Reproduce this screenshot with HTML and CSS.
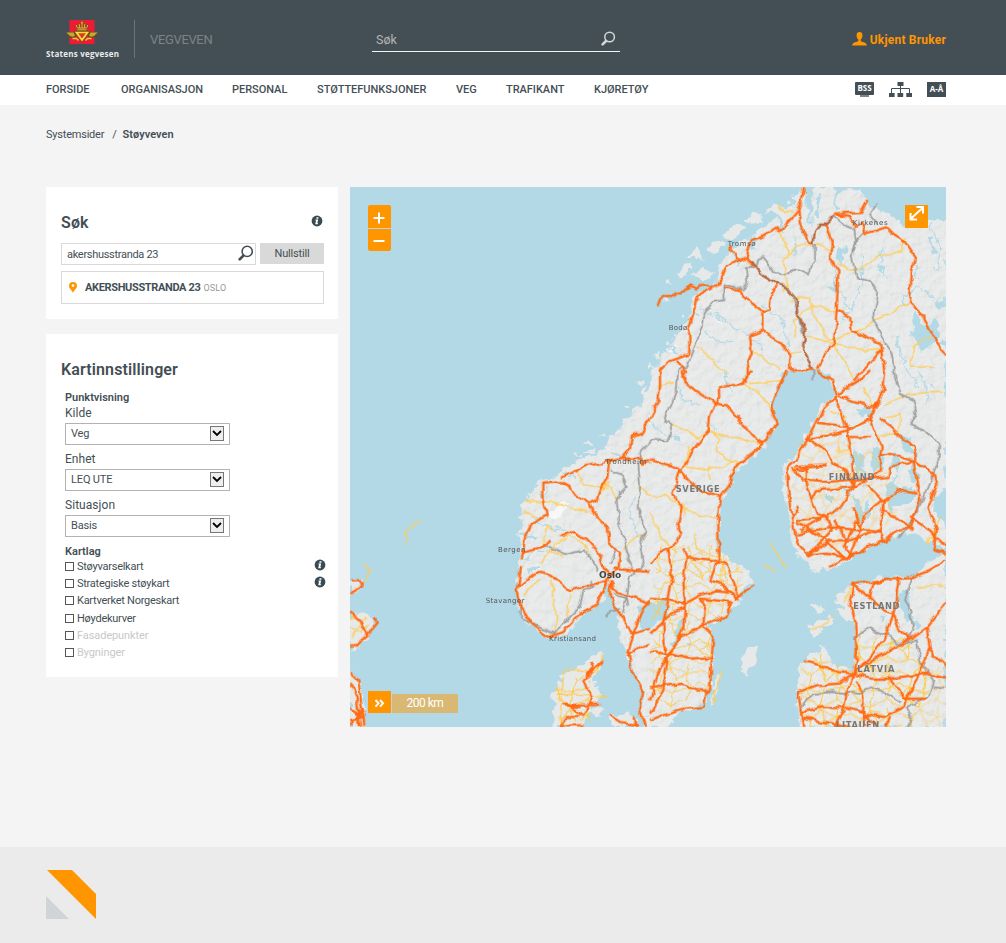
FILE: index.html
```html
<!DOCTYPE html>
<html lang="no">
<head>
<meta charset="utf-8">
<title>Støyveven</title>
<link rel="stylesheet" href="styles.css">
</head>
<body>
<svg class="defs" width="0" height="0">
  <symbol id="lens" viewBox="0 0 16 16"><circle cx="9.6" cy="6" r="4.8" fill="none" stroke="currentColor" stroke-width="1.5"/><path d="M6 10 2.600 13.400" stroke="currentColor" stroke-width="2.6" stroke-linecap="round"/></symbol>
  <symbol id="info" viewBox="0 0 12 12"><circle cx="6" cy="6" r="5.4" fill="#3a4a52"/><path d="M5.6 2.2h2l-.3 1.5h-2zM4.5 4.6h2.7L6.3 8.3h.8l-.2 1H4.2l.9-3.7h-.8z" fill="#fff"/></symbol>
</svg>
<header class="top">
  <div class="wrap top-row">
    <div class="brand">
      <svg class="crest" width="34" height="26" viewBox="0 0 34 26">
        <rect x="4.5" y="0" width="25" height="24" fill="#ed1c35"/>
        <path d="M.5 12h8.500l2.500 4-3 2.500-4-1-1-2.500zM33.500 12H25l-2.500 4 3 2.500 4-1 1-2.500z" fill="#66501f"/>
        <path d="M1.500 12.600h7l1.500 2.900-2 1.300-3-.8zM32.500 12.600h-7l-1.500 2.900 2 1.300 3-.8z" fill="#c8a52c"/>
        <path d="M11.500 12.500h11l-5.500 7.500z" fill="#e3342f" stroke="#66501f" stroke-width="3.400"/>
        <path d="M11.500 12.500h11l-5.500 7.500z" fill="#e3342f" stroke="#f5e03a" stroke-width="1.700"/>
        <path d="M7.500 18.500h4l2 2M26.500 18.500h-4l-2 2" fill="none" stroke="#e6cf35" stroke-width="1.400"/>
        <path d="M12.500 9.800h9M12.300 8 11.300 4.800M14.600 8l-.4-4M17 8V1.500M19.400 8l.4-4M21.700 8l1-3.200M15.700 2.800h2.600" fill="none" stroke="#66501f" stroke-width="2"/>
        <path d="M12.500 9.800h9M12.500 8h9M12.300 8 11.300 5M14.600 8l-.4-4M17 8V1.500M19.400 8l.4-4M21.700 8l1-3M15.900 2.800h2.200" fill="none" stroke="#d8bd2e" stroke-width="1"/>
      </svg>
      <span class="brand-name">Statens vegvesen</span>
    </div>
    <div class="site">VEGVEVEN</div>
    <div class="topsearch"><span>Søk</span><svg width="16" height="16"><use href="#lens"/></svg></div>
    <div class="user"><svg width="15" height="14" viewBox="0 0 15 14"><path d="M7.500 0C5.300 0 4.500 1.500 4.600 3.500c0 1.800.7 3.300 1.700 4v1.400C5.500 10 .4 9.800 0 13.600h15C14.600 9.800 9.500 10 8.700 8.900V7.500c1-.7 1.700-2.200 1.700-4C10.500 1.500 9.700 0 7.500 0z" fill="#ff9600"/></svg><span>Ukjent Bruker</span></div>
  </div>
</header>
<nav class="nav">
  <div class="wrap nav-row">
    <a class="n1">FORSIDE</a><a class="n2">ORGANISASJON</a><a class="n3">PERSONAL</a><a class="n4">STØTTEFUNKSJONER</a><a class="n5">VEG</a><a class="n6">TRAFIKANT</a><a class="n7">KJØRETØY</a>
    <div class="tools">
      <div class="bss"><span>BSS</span><i></i></div>
      <svg width="23" height="15" viewBox="0 0 23 15"><path d="M8.500 0h6v4h-6zM0 11h5.600v4H0zM8.500 11h5.700v4H8.500zM17.300 11H23v4h-5.700z" fill="#444f55"/><path d="M11.500 4v7M2.500 11V6.500h18V11" fill="none" stroke="#444f55"/></svg>
      <div class="az">A-Å</div>
    </div>
  </div>
</nav>
<main class="wrap">
  <div class="crumbs"><span>Systemsider</span><span class="slash">/</span><b>Støyveven</b></div>
  <div class="cols">
    <aside>
      <section class="panel search">
        <div class="head"><h2>Søk</h2><svg width="12" height="12"><use href="#info"/></svg></div>
        <div class="row"><div class="field"><span>akershusstranda 23</span><svg width="17" height="17"><use href="#lens"/></svg></div><div class="reset">Nullstill</div></div>
        <div class="hit"><svg width="8" height="11" viewBox="0 0 8 11"><path fill-rule="evenodd" d="M4 0a4 4 0 0 1 4 4C8 6.500 5 8 4 11 3 8 0 6.500 0 4a4 4 0 0 1 4-4zm0 2.200a1.400 1.400 0 1 0 0 2.800 1.400 1.400 0 0 0 0-2.800z" fill="#ff9600"/></svg><b>AKERSHUSSTRANDA 23</b><small>OSLO</small></div>
      </section>
      <section class="panel settings">
        <h2>Kartinnstillinger</h2>
        <div class="form">
          <h3>Punktvisning</h3>
          <label>Kilde</label>
          <div class="select"><span>Veg</span><i><svg width="10" height="7" viewBox="0 0 10 7"><path d="m1 1 4 4 4-4" fill="none" stroke="#000" stroke-width="1.800"/></svg></i></div>
          <label>Enhet</label>
          <div class="select"><span>LEQ UTE</span><i><svg width="10" height="7" viewBox="0 0 10 7"><path d="m1 1 4 4 4-4" fill="none" stroke="#000" stroke-width="1.800"/></svg></i></div>
          <label>Situasjon</label>
          <div class="select"><span>Basis</span><i><svg width="10" height="7" viewBox="0 0 10 7"><path d="m1 1 4 4 4-4" fill="none" stroke="#000" stroke-width="1.800"/></svg></i></div>
          <h3 class="layers">Kartlag</h3>
          <div class="check"><i></i><span>Støyvarselkart</span><svg width="12" height="12"><use href="#info"/></svg></div>
          <div class="check"><i></i><span>Strategiske støykart</span><svg width="12" height="12"><use href="#info"/></svg></div>
          <div class="check"><i></i><span>Kartverket Norgeskart</span></div>
          <div class="check"><i></i><span>Høydekurver</span></div>
          <div class="check off"><i></i><span>Fasadepunkter</span></div>
          <div class="check off"><i></i><span>Bygninger</span></div>
        </div>
      </section>
    </aside>
    <div class="map">
      <svg width="596" height="540" viewBox="0 0 1788 1620">
        <defs>
          <filter id="coast" x="0" y="0" width="1788" height="1620" filterUnits="userSpaceOnUse"><feTurbulence type="fractalNoise" baseFrequency=".035" numOctaves="3" seed="4"/><feDisplacementMap in="SourceGraphic" scale="34" xChannelSelector="R" yChannelSelector="G"/></filter>
          <filter id="rough" x="0" y="0" width="1788" height="1620" filterUnits="userSpaceOnUse"><feTurbulence type="fractalNoise" baseFrequency=".03" numOctaves="2" seed="9"/><feDisplacementMap in="SourceGraphic" scale="20" xChannelSelector="R" yChannelSelector="G"/></filter>
          <filter id="relief" x="0" y="0" width="1788" height="1620" filterUnits="userSpaceOnUse"><feTurbulence type="fractalNoise" baseFrequency=".04" numOctaves="4" seed="2" result="n"/><feDiffuseLighting in="n" surfaceScale="8" lighting-color="#fff"><feDistantLight azimuth="225" elevation="62"/></feDiffuseLighting><feComposite in2="SourceAlpha" operator="in"/></filter>
          <pattern id="mesh" width="150" height="130" patternUnits="userSpaceOnUse"><path d="M0 20 35 35 60 10 110 30 150 20M35 35 25 75 0 90M25 75 70 85 60 130M70 85 80 50 60 10V0M80 50 110 30 125 70 150 90M125 70 70 85M125 70 110 110 60 130M110 110 150 130M25 75 30 110 60 130M0 90 30 110 0 130M110 30 115 0M125 70 150 55M0 55 25 75" fill="none" stroke="#ffc83c" stroke-width="3"/></pattern>
          <path id="main" d="M500 1254 508 1140 508 1089 515 1010 515 960 575 885 635 855 700 815 765 790 775 760 825 700 870 650 900 600 905 555 950 490 985 440 1020 400 1030 330 1095 290 1110 235 1140 190 1195 150 1250 115 1290 75 1335 55 1350 0 1362 0 1370 60 1385 100 1382 40 1395 15 1420 0 1450 0 1460 35 1475 10 1530 10 1550 45 1560 60 1580 65 1640 95 1660 120 1720 95 1788 108V905L1755 930 1752 980 1788 1010V1085L1730 1060 1690 1040 1650 1045 1600 1060 1550 1085 1500 1115 1440 1150 1385 1142 1345 1105 1320 1050 1325 1000 1305 950 1295 890 1305 835 1340 800 1370 740 1400 690 1420 655 1450 630 1455 610 1435 570 1410 550 1310 550 1300 565 1275 610 1262 665 1278 710 1245 775 1200 815 1160 850 1140 900 1115 930 1110 990 1105 1084 1140 1119 1190 1149 1205 1184 1165 1224 1180 1239 1150 1264 1115 1299 1070 1314 1090 1364 1090 1414 1085 1504 1065 1514 1060 1554 990 1574 950 1620H885L870 1574 880 1514 850 1444 830 1404 810 1344 800 1264 785 1230 770 1190 765 1224 740 1259 700 1279 680 1314 640 1344 595 1354 550 1319 520 1294Z"/>
        </defs>
        <rect width="1788" height="1620" fill="#b3d9e6"/>
        <g fill="#e7e8e8" filter="url(#coast)">
          <use href="#main"/>
          <path d="M1505 1192 1600 1172 1690 1170 1788 1090V1620H1350L1340 1520 1352 1430 1375 1410 1415 1382 1440 1405 1460 1440 1510 1455 1520 1380 1510 1300 1470 1300 1455 1270 1485 1260 1450 1240 1460 1225 1490 1210Z"/>
          <path d="M1380 1260 1410 1250 1425 1262 1400 1280ZM1375 1315 1440 1285 1455 1295 1400 1350 1380 1350ZM1180 1410 1195 1385 1225 1380 1210 1430 1188 1460 1175 1450ZM1115 1450 1090 1540 1082 1550 1095 1480Z"/>
          <path d="M615 1620 610 1520 635 1460 690 1440 730 1400 755 1400 735 1480 760 1525 725 1560 700 1620ZM780 1580 860 1580 865 1620H790ZM720 1565 750 1555 760 1575 740 1590Z"/>
          <path d="M0 1178 40 1180 25 1210 0 1225ZM0 1275 50 1280 80 1305 45 1365 0 1395ZM0 1450 30 1480 45 1550 50 1620H0Z"/>
          <path d="M980 270 1000 235 1030 230 1010 260ZM1010 210 1040 185 1060 215ZM1020 265 1060 240 1090 260 1060 285ZM1070 180 1110 155 1130 170 1090 200ZM1120 145 1170 110 1190 125 1140 155ZM1180 95 1230 80 1240 105 1200 110ZM1250 70 1270 50 1300 60 1290 85ZM1380 30 1395 0 1440 0 1420 40ZM690 795 725 780 730 795ZM700 770 720 760 725 770ZM875 620 890 595 895 625ZM630 860 650 840 660 850Z"/>
          <path d="M950 290 962 280 970 295ZM935 340 950 330 960 345ZM895 545 905 530 915 545ZM865 590 875 580 880 600ZM820 665 835 655 838 668ZM745 745 760 735 765 750ZM675 810 690 800 695 815ZM1330 30 1345 20 1350 40ZM1300 45 1315 32 1325 50ZM555 890 570 878 575 895ZM530 925 545 915 548 930ZM505 985 515 975 520 995ZM500 1050 508 1035 515 1055ZM820 1370 830 1350 838 1390ZM1330 1100 1340 1095 1345 1115ZM1395 1145 1410 1140 1405 1160ZM910 510 925 500 930 515ZM945 470 955 460 960 475ZM990 390 1000 380 1005 395Z"/>
        </g>
        <g filter="url(#relief)" opacity=".16"><use href="#main"/><path d="M1520 1195 1690 1180 1788 1110V1620H1350L1350 1440 1415 1392 1460 1440 1520 1450Z"/></g>
        <g fill="#fff" opacity=".7" filter="url(#coast)"><path d="M590 980 640 945 655 955 610 1000ZM950 490 975 470 980 490ZM550 1145 570 1130 572 1150ZM1100 400 1110 395 1115 415Z"/></g>
        <g fill="#b3d9e6" filter="url(#coast)">
          <path d="M865 1260 955 1235 950 1290 915 1315 880 1330ZM960 1375 985 1310 1000 1295 995 1330 975 1385ZM1650 1212 1670 1210 1675 1260 1685 1290 1670 1300 1650 1250ZM1690 1295 1710 1300 1715 1325 1700 1330ZM1590 1285 1605 1290 1598 1310Z"/>
          <path d="M1605 890 1630 880 1650 910 1680 900 1700 930 1670 960 1620 960 1610 930ZM1640 740 1680 750 1690 800 1665 795ZM1520 660 1560 665 1570 690 1530 685ZM1500 790 1530 800 1550 860 1520 850ZM1510 920 1530 940 1540 1010 1520 1000ZM1560 790 1590 780 1600 830 1570 860ZM1460 190 1490 170 1485 215 1460 220ZM1440 300 1470 290 1460 320ZM1690 400 1700 370 1720 420 1760 400 1770 440 1740 480 1720 500 1690 460ZM1610 940 1640 950 1620 980ZM1430 925 1450 920 1445 955ZM1180 1100 1190 1095 1200 1110ZM1005 1370 1020 1370 1020 1385Z"/>
          <path d="M1670 850 1700 840 1705 880 1680 890ZM1630 800 1650 810 1645 850 1625 840ZM1545 950 1560 940 1570 990 1550 1000ZM1480 900 1495 890 1500 930ZM1750 350 1788 340V360L1760 370ZM1760 470 1788 460V480ZM1590 240 1610 235 1605 260Z"/>
        </g>
        <g fill="none" stroke="#b3d9e6" stroke-width="4" filter="url(#coast)">
          <path d="M545 990 590 1020 650 1030M520 1120 560 1090 600 1090M570 930 600 900M640 860 680 870M1050 360 1120 400 1190 440 1240 490M1060 430 1100 460 1150 470M1240 360 1300 400 1320 480M1470 210 1450 290 1490 350 1500 380M1530 200 1540 260 1520 330 1480 400M1600 180 1590 250 1620 280M1740 110 1770 180 1760 250M850 930 840 980 860 1050M980 590 1000 640 1050 660M1120 560 1150 620M1060 700 1100 730M900 700 930 740 990 750M1330 150 1340 200M1650 350 1700 300 1760 330M1640 450 1660 520 1700 600M1350 100 1370 170M1700 550 1740 600 1730 650M1690 230 1700 270"/>
          <path stroke-width="9" d="M1380 30V110M1415 20 1400 90M1452 20 1460 75M1500 800 1520 840 1545 900M1590 800 1600 850M1640 860 1620 930M1700 800 1690 850M1740 150 1750 200M775 1190V1245M530 1150 570 1140M1200 150 1215 190M1150 200 1165 240M1280 80 1300 130M1030 380 1050 390M780 800 830 810M515 1040 560 1050M960 480 990 490"/>
        </g>
        <g filter="url(#rough)" fill="none" stroke-linejoin="round">
          <path fill="url(#mesh)" d="M1355 1450 1415 1400 1500 1455 1530 1330 1600 1355 1680 1350 1720 1430 1740 1500 1680 1620H1355ZM620 1500 690 1460 720 1480 720 1600 625 1610ZM0 1285 50 1290 60 1330 0 1350Z"/>
          <path fill="url(#mesh)" opacity=".75" d="M920 1074 1100 1074 1180 1150 1180 1220 1085 1310 1080 1500 920 1590 900 1450Z"/>
          <path fill="url(#mesh)" opacity=".5" d="M1320 820 1400 700 1580 800 1640 900 1640 1000 1480 1100 1340 1040ZM1690 1450 1788 1430V1620H1680Z"/>
          <g stroke="#ffcc50" stroke-width="4">
            <path d="M1290 55 1300 75 1330 75M1285 135 1310 175 1315 210 1300 225 1315 290 1300 310M1315 210 1340 180 1400 170 1440 190M1465 230 1500 250 1530 245 1590 205 1650 195 1665 150M1320 345 1350 330 1380 335 1385 355 1350 390 1330 400 1340 450M1385 355 1460 375M1385 355 1400 400 1420 430 1440 460 1500 440 1540 425 1570 400 1610 385 1680 345M1370 450 1430 460 1450 475 1480 520 1510 570M1450 470 1530 490 1590 485M1040 480 1080 510 1100 540 1140 560M1200 490 1240 510 1290 550M1740 450 1690 475 1685 540 1755 540M1325 500 1350 490"/>
            <path d="M965 715 1010 730 1040 750 1080 735 1160 755 1240 770M1080 735 1110 755 1100 790 1135 820 1170 830M1020 780 1000 840 1050 845 1100 845 1150 825M1080 840V880M920 600 975 585M1180 590 1230 620 1270 675M1200 590 1300 580M1540 600 1560 640 1570 665M1600 655 1680 620 1780 615M1610 690 1650 680 1645 740 1580 745M1440 670 1490 690M1460 760 1470 800 1500 790M900 925 950 925 990 960 1040 980 1100 990M1000 950 1005 980M1040 1040 1035 1080 1100 1110M900 980 930 1040 980 1100M1260 1065 1310 1150M1770 990 1750 1050 1730 1070"/>
            <path d="M525 940 580 945 620 945 670 965 720 970M675 850 700 890 750 900 770 890 800 940M740 930 780 880M865 900 900 925M820 1085 860 1050 890 1040M520 975 560 990M575 1080 590 1020 610 1030M600 1095 650 1045 690 1060 720 1100M605 1180 610 1250 620 1290 610 1340M660 1220 650 1290M525 1230 540 1200 570 1180M570 1130 600 1090 640 1105M165 1080 175 1050 160 1040 180 1025 215 995M40 1130 60 1150 50 1170 30 1190M0 1350 50 1290M640 1460 650 1450 740 1455 755 1400M620 1520 770 1530M640 1470 630 1600M1245 1130 1250 1145 1270 1150M1450 1295 1380 1330M1115 1450 1090 1550M1700 1200 1780 1195M1020 1110 1060 1180M1100 1084 1130 1180M1485 1250 1500 1200"/>
          </g>
          <g stroke="#999" stroke-width="5">
            <path d="M1580 50 1560 85 1580 110M1455 90 1485 115 1510 125 1515 170 1505 205 1520 270 1560 285 1585 315 1570 400 1595 450 1625 500 1635 570 1650 620 1690 640 1700 680 1680 710 1730 740 1768 770 1765 820 1740 890 1700 980 1650 1050M1540 140 1520 160 1510 200M1395 170V215L1375 260 1330 245 1310 262 1275 260 1240 210 1225 215 1220 240 1190 240 1195 290 1180 305 1120 292 1120 340 1085 345 1060 380 1055 420 1035 480 1010 540 985 545 980 610 945 700 965 715 955 760 910 755 870 800 865 830 870 900 865 980 890 1030 870 1070 880 1140 840 1170 830 1230 815 1280M1330 330 1345 390 1360 440M1390 550V580"/>
            <path d="M785 850 820 865 830 900 800 935 805 1000 820 1050 830 1090 850 1150M570 1080 600 1080 650 1102 700 1090 730 1120 745 1160M720 1175 730 1200 700 1210 690 1260 650 1300 610 1340 550 1310M510 1255V1285L540 1310M770 1290 780 1275 810 1265M790 1220 830 1230 835 1260M800 1080 780 1130M1510 1355 1555 1325 1620 1350 1640 1370 1700 1360 1710 1420 1750 1480 1735 1530 1670 1560 1685 1590 1670 1620M1355 1560 1390 1520 1450 1515 1530 1520 1560 1500 1600 1515 1650 1545M1750 1500 1788 1505M1685 1165 1665 1240 1695 1320 1675 1360"/>
          </g>
          <g stroke="#ff6a13" stroke-width="7">
            <path d="M1362 0 1355 40 1345 70 1310 110 1285 135 1280 120 1245 145 1205 160 1195 190 1190 210 1165 220 1145 190 1145 175M1165 220 1130 240 1115 275 1095 300 1060 290 1040 305 1020 295 1005 310 975 315 960 330 935 330 925 360M1345 70 1350 110 1380 165 1390 170M1455 80 1530 75 1552 35M1425 110 1445 165 1440 215 1465 250 1460 370 1455 430 1450 470 1430 490 1400 545M1455 80 1500 90 1515 120 1540 110 1545 140 1580 130 1610 120 1640 150 1665 165 1695 210 1685 260 1680 345 1720 390 1750 450 1788 505M1190 210 1210 240M1120 300 1170 310 1190 335 1240 375 1258 370 1262 330 1280 290M1240 375V430L1290 465 1325 510 1320 550 1390 548M1240 430 1200 445 1205 500 1190 540 1190 588M1095 300 1040 330 1030 380 1015 430 1015 500 960 520 930 550 930 600 925 640 900 690M980 520 1005 550 995 575"/>
            <path d="M995 549 1000 580 1035 610 1095 650 1110 630 1110 600 1180 590 1200 550M1095 650 1080 690 1075 730 1020 800 1010 830 990 850 970 925 995 960 985 1010 990 1040 980 1070M1095 650 1130 655 1160 690 1210 750 1240 770 1280 710 1265 670 1280 610 1310 552M1240 770 1205 800 1165 830 1140 870 1135 900 1110 930 1105 980 1105 1084M990 850 1015 880 1050 910 1115 928M900 820 960 835 990 845"/>
            <path d="M1400 550 1445 580 1455 630 1420 665 1395 710 1370 760 1345 810 1310 840 1310 900 1325 990 1335 1040 1350 1080 1375 1105 1430 1100 1500 1115 1550 1080 1610 1060 1640 1030 1680 1020 1710 940 1690 820 1620 800 1590 810 1595 780 1560 690 1580 650 1580 665 1460 625M1460 620 1540 570 1560 549M1460 370 1500 390 1505 430 1530 440 1590 470 1605 560 1600 610 1580 660M1590 490 1530 560 1510 580M1455 630 1490 720 1400 710M1490 720 1505 800 1510 880 1510 900 1470 960 1430 990 1340 1000M1370 755 1440 745 1490 730 1560 700M1370 755 1430 790 1450 830 1490 850 1510 900M1490 750 1560 750M1590 810 1590 850 1550 880 1510 900 1400 910 1385 940 1400 980 1430 990 1445 1030 1375 1105M1550 895 1600 945 1640 910 1700 920M1600 945 1590 1030 1530 1030 1440 1020 1340 1040M1600 945 1600 970 1650 1000 1690 1030M1325 840 1360 880 1420 885 1550 875 1615 870 1620 840 1700 820M1590 690 1640 740 1690 780 1700 820M1335 850 1370 845 1370 890 1385 940M1335 840 1430 835M1350 960 1325 990M1450 1000 1480 1040 1500 1110 1530 1030 1545 980 1595 940M1375 1105 1440 1060 1500 1060 1590 1030 1600 1060M1510 960 1535 1030M1340 1005 1430 1060 1480 1110M1350 1030 1420 990M1690 820 1750 860 1760 895 1735 960 1760 1030 1750 1090 1788 1100M1680 990 1740 1030 1788 1080M1520 1000 1480 1080"/>
            <path stroke-width="18" d="M1495 1110 1510 1105M1375 1103 1380 1101M832 1398 838 1404M1508 1456 1515 1460M1158 1228 1165 1232M20 1570 30 1580"/>
            <path d="M632 872 700 840 765 825 815 815 870 815 875 830 900 825M815 812 840 785 845 750 880 735 900 690M780 825 775 870 750 910 740 940 720 950 670 920 655 895 630 885 580 890 580 930 590 985 545 1010 525 1050 515 1120M720 950 740 990 770 1020 775 1065 810 1095 805 1150 780 1165M515 1095 570 1080 605 1060M630 1045 670 1035 710 1055 750 1100 760 1145 780 1165M510 1140 500 1210 510 1260 545 1310 595 1350 640 1335 690 1280 740 1255 760 1210 775 1170M500 1200 560 1155 600 1165 660 1210 720 1195 775 1180M790 1145 900 1155M780 1180 790 1210 840 1225 900 1250M780 1190V1230L810 1290 850 1340 835 1400 850 1460 880 1510 870 1570 885 1620M850 1340 880 1260 900 1240M850 1340 900 1325M840 1400 900 1370"/>
            <path d="M720 1420 730 1440 700 1480 725 1540 700 1590 650 1550 690 1560 640 1555 750 1550M755 1425 710 1470M690 1590 650 1590 630 1615H700M780 1585 810 1605 860 1610M850 1590 860 1620M0 1180H30L35 1200 0 1220M0 1275 30 1300 55 1345 20 1375 0 1380M50 1345 80 1310 75 1295M0 1455 25 1480 35 1560 40 1620M0 1490 20 1530 30 1620M0 1560 35 1590 0 1600M0 1615 40 1565"/>
            <path d="M980 1070 940 1090 920 1100 900 1130M900 1235 955 1240 1005 1250 1050 1225 1100 1210 1150 1215 1160 1240M955 1084 965 1170 950 1250 940 1310 945 1400M1105 1084 1105 1110 1080 1180M1000 1084 1010 1110 1000 1180 1005 1250 1000 1320 960 1400M1010 1110 1070 1120 1130 1130 1150 1180 1165 1230 1215 1195M1080 1180 1110 1190 1155 1225M1050 1235 1065 1260 1060 1315 1090 1350 1085 1410 1020 1415 950 1400 900 1395M1050 1235 1145 1245 1125 1290 1060 1315 990 1350 955 1400 940 1500 900 1580M900 1340 935 1310 960 1280 1005 1260M1085 1410 1080 1510 1065 1520 1060 1560 1000 1565 950 1580 900 1600M900 1500 1000 1490 1040 1510 1075 1510M955 1400 920 1470 900 1540"/>
            <path d="M1510 1192 1590 1180 1680 1173 1740 1150 1788 1120M1510 1192 1500 1240 1515 1300 1520 1400 1510 1460 1490 1520 1480 1570 1450 1620M1510 1192 1560 1230 1600 1270 1630 1280 1640 1240 1650 1170M1560 1230 1570 1190 1610 1180M1630 1280 1610 1340 1590 1380 1530 1440M1630 1280 1650 1330 1680 1350M1515 1450 1620 1390 1690 1350 1730 1320 1788 1250M1730 1320 1740 1390 1788 1440M1740 1380 1700 1480 1670 1530 1660 1560 1600 1590 1540 1580M1365 1422 1410 1435 1460 1455 1515 1460 1560 1475 1620 1475 1650 1470 1730 1460 1788 1475M1510 1460 1460 1490 1400 1495 1345 1515 1355 1590 1360 1620M1355 1575 1420 1560 1480 1560 1540 1575 1545 1620M1520 1480 1540 1530 1540 1580M1620 1475 1650 1510 1660 1535 1730 1535M1360 1595 1430 1605 1500 1620M1540 1580 1580 1620M1620 1590 1610 1620M1440 1140 1490 1110 1550 1090"/>
          </g>
          <path stroke="#b5663a" stroke-width="7" d="M1205 225 1230 260 1280 290 1310 300 1340 335 1345 380 1365 430 1362 490 1385 545M1390 170 1395 130 1410 110 1430 110 1455 85"/>
        </g>
        <g class="labels" fill="#555">
          <text x="1133" y="178" textLength="84">Tromsø</text><text x="1508" y="114" textLength="105">Kirkenes</text><text x="956" y="430" textLength="56">Bodø</text><text x="766" y="831" textLength="123">Trondheim</text><text x="444" y="1095" textLength="82">Bergen</text><text x="407" y="1247" textLength="116">Stavanger</text><text x="597" y="1361" textLength="141">Kristiansand</text>
          <text class="city" x="747" y="1174" textLength="67" lengthAdjust="spacingAndGlyphs">Oslo</text>
          <g class="country" fill="#777"><text x="977" y="914" textLength="132">SVERIGE</text><text x="1436" y="880" textLength="137">FINLAND</text><text x="1510" y="1267" textLength="138">ESTLAND</text><text x="1522" y="1454" textLength="111">LATVIA</text><text x="1458" y="1624" textLength="130">LITAUEN</text></g>
        </g>
      </svg>
      <div class="zoom"><button><svg width="23" height="23"><path d="M5.500 13h11M11 7.500v11" stroke="#fff" stroke-width="2"/></svg></button><button><svg width="23" height="22"><path d="M5.500 12h11" stroke="#fff" stroke-width="2"/></svg></button></div>
      <div class="expand"><svg width="23" height="23"><path d="m6 13.500 11-10M11.500 2H18v6.500M5.500 8v6.500H12" fill="none" stroke="#fff" stroke-width="2"/></svg></div>
      <div class="scale"><div class="more"><svg width="23" height="22"><path d="m7.500 9 3 3.300-3 3.300M12 9l3 3.300-3 3.300" fill="none" stroke="#fff" stroke-width="2"/></svg></div><div class="km">200 km</div></div>
    </div>
  </div>
</main>
<footer><div class="wrap"><svg width="50" height="49" viewBox="0 0 50 49"><path d="M1 0h25l24 24v25z" fill="#ff9600"/><path d="M0 26v23h23z" fill="#cfd4d7"/></svg></div></footer>
</body>
</html>
```
FILE: styles.css
```css
* { box-sizing: border-box; }
body { margin: 0; min-height: 943px; display: flex; flex-direction: column; background: #f4f4f4; color: #444f55; font: 12px/16px Roboto, "Liberation Sans", sans-serif; }
svg { display: block; flex: none; }
.defs { position: absolute; }
.wrap { width: 900px; margin: 0 auto; }
main.wrap { flex: 1; margin-left: 46px; }
.top { height: 75px; background: #444f55; }
.top .wrap, .nav .wrap, footer .wrap { margin-left: 46px; }
.top-row { display: flex; height: 75px; }
.brand { width: 89px; height: 38px; margin-top: 20px; border-right: 1px solid #6b7479; }
.crest { margin-left: 19px; }
.brand-name { display: block; margin-top: 1px; color: #e9ebec; font: bold 8px/14px "Open Sans", sans-serif; white-space: nowrap; letter-spacing: .25px; }
.site { width: 237px; padding: 31px 0 0 15px; font-size: 13px; line-height: 18px; color: #7b8387; letter-spacing: -.35px; }
.topsearch { width: 248px; height: 23px; margin-top: 29px; padding: 2px 4px; display: flex; justify-content: space-between; border-bottom: 1px solid #f0f4f5; color: #b5b5b0; font-size: 12.500px; line-height: 18px; }
.topsearch svg { color: #d2d8da; }
.user { margin: 31px 0 0 auto; display: flex; gap: 3px; color: #ff9600; font-weight: bold; font-size: 12px; line-height: 18px; letter-spacing: .2px; }
.user svg { margin-top: 1px; }
.nav { height: 30px; background: #fff; }
.nav-row { display: flex; height: 30px; font-weight: 500; font-size: 11px; line-height: 29px; white-space: nowrap; letter-spacing: -.03px; }
.n1 { width: 75px; } .n2 { width: 111px; } .n3 { width: 85px; } .n4 { width: 139px; } .n5 { width: 50px; } .n6 { width: 88px; }
.tools { display: flex; margin-left: auto; padding-top: 7px; letter-spacing: 0; }
.bss { width: 19px; height: 15px; margin-right: 15px; }
.bss span { display: block; height: 13px; background: #444f55; color: #fff; border-radius: 1px; font: bold 8px/11px "Open Sans", sans-serif; text-align: center; }
.bss i { display: block; width: 9px; height: 2px; margin: 0 auto; background: #7d868a; }
.az { width: 19px; height: 15px; margin-left: 15px; background: #444f55; color: #fff; font: bold 8px/14px "Open Sans", sans-serif; text-align: center; }
.crumbs { display: flex; height: 82px; padding-top: 22px; font-size: 11px; letter-spacing: -.22px; }
.crumbs .slash { margin: 0 6px 0 8px; }
.crumbs b { font-weight: 600; letter-spacing: .03px; }
.cols { display: flex; gap: 12px; }
aside { width: 292px; display: flex; flex-direction: column; gap: 15px; }
.panel { background: #fff; padding: 0 15px; }
h2, h3 { margin: 0; }
h2 { font-size: 16px; line-height: 22px; font-weight: 600; letter-spacing: .12px; }
.search { height: 132px; padding: 25px 14px 0 15px; }
.head { display: flex; justify-content: space-between; height: 31px; }
.head svg { margin: 3px 1px 0 0; }
.row { display: flex; gap: 4px; }
.field { width: 195px; height: 22px; border: 1px solid #d9d9d9; display: flex; justify-content: space-between; padding: 1px 1px 0 5px; font-size: 11px; line-height: 19px; letter-spacing: -.3px; }
.reset { width: 64px; height: 21px; background: #d9d9d9; text-align: center; line-height: 21px; font-size: 11px; letter-spacing: -.2px; }
.hit { width: 263px; height: 33px; margin-top: 6px; border: 1px solid #d9d9d9; display: flex; align-items: center; padding-left: 7px; }
.hit b { margin: 0 3px 0 8px; font-size: 11px; letter-spacing: -.35px; font-weight: 700; }
.hit small { font-size: 9px; color: #999; letter-spacing: .15px; }
.settings { height: 343px; padding-top: 25px; }
.form { padding: 8px 0 0 4px; }
h3 { font-size: 11px; line-height: 18px; height: 16px; font-weight: 600; }
label { display: block; font-size: 12px; line-height: 17px; height: 18px; letter-spacing: .05px; }
.select { width: 165px; height: 22px; margin-bottom: 6px; padding: 0 5px; border: 1px solid #b3b3b3; display: flex; justify-content: space-between; font-size: 11px; line-height: 19px; letter-spacing: -.15px; }
.select i { width: 14px; height: 15px; margin-top: 2px; border: 1px solid #777; background: #eee; display: flex; align-items: center; justify-content: center; }
.check { display: flex; height: 17.200px; font-size: 11px; line-height: 15px; letter-spacing: -.26px; }
.check i { width: 9px; height: 9px; margin: 3px 3px 0 0; border: 1px solid #555; }
.check svg { margin: 0 -3px 0 auto; }
.off span { color: #c8c8c8; letter-spacing: -.1px; }
.map { position: relative; width: 596px; height: 540px; overflow: hidden; }
.labels { font-family: "DejaVu Sans", sans-serif; font-size: 21px; }
.city { font-size: 26px; font-weight: bold; fill: #444; }
.country { font-size: 25px; font-weight: bold; }
.zoom { position: absolute; left: 18px; top: 18px; display: flex; flex-direction: column; gap: 1px; border-radius: 2px; overflow: hidden; }
button { display: block; padding: 0; border: 0; background: #ff9600; }
.expand { position: absolute; right: 18px; top: 18px; width: 23px; height: 23px; background: #ff9600; }
.scale { position: absolute; left: 18px; bottom: 14px; display: flex; align-items: flex-end; gap: 1px; }
.more { background: #ff9600; }
.km { width: 66px; height: 19px; background: #d9b873; color: #fff; text-align: center; line-height: 19px; font-size: 12px; letter-spacing: -.5px; }
footer { height: 96px; padding-top: 23px; background: #ebebeb; }
```
